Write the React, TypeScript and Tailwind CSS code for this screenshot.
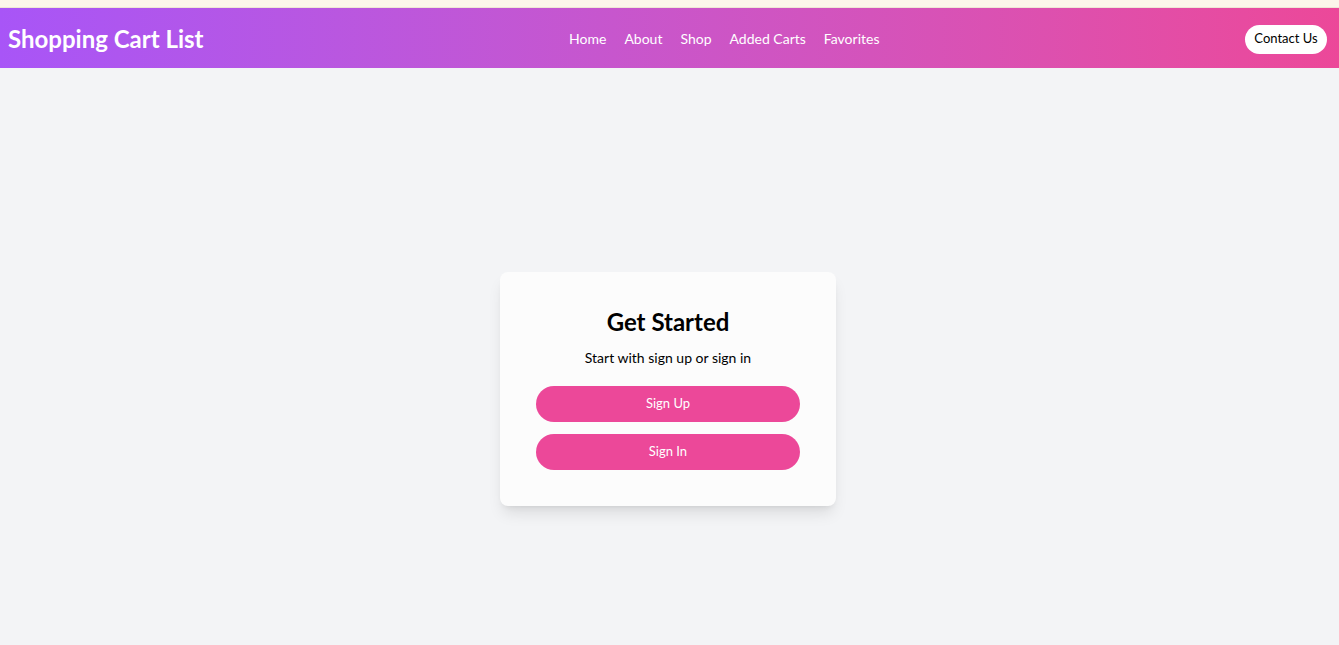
import React from "react";

const links = ["Home", "About", "Shop", "Added Carts", "Favorites"];

export default function App() {
  return (
    <div
      className="min-h-screen bg-[#f3f4f6] text-black"
      style={{ fontFamily: '"Segoe UI", Lato, "Noto Sans", sans-serif' }}
    >
      {/* top strip */}
      <div className="h-2 bg-[#fcf6ea] border-b border-[#efe6d6]" />

      {/* Navbar */}
      <nav className="h-[60px] flex items-center justify-between pl-2 pr-3 pt-[2px] bg-gradient-to-r from-[#a855f7] to-[#ec4899]">
        <h1 className="text-2xl font-bold text-white">Shopping Cart List</h1>
        <ul className="flex items-center gap-[18px] text-white text-sm">
          {links.map((l) => (
            <li key={l}>
              <a href="#">{l}</a>
            </li>
          ))}
        </ul>
        <button className="bg-white text-black text-[13px] whitespace-nowrap rounded-full w-[82px] h-[29px]">
          Contact Us
        </button>
      </nav>

      {/* Main */}
      <main className="flex justify-center pt-[204px] pr-[3px]">
        <div className="w-[336px] bg-[#fcfcfc] rounded-lg shadow-lg px-9 pt-[34px] pb-9 text-center">
          <h2 className="text-2xl font-bold">Get Started</h2>
          <p className="text-sm mt-2.5">Start with sign up or sign in</p>
          <div className="flex flex-col gap-3 mt-[18px]">
            <button className="h-9 rounded-full bg-[#ec4899] text-white text-[13px]">Sign Up</button>
            <button className="h-9 rounded-full bg-[#ec4899] text-white text-[13px]">Sign In</button>
          </div>
        </div>
      </main>
    </div>
  );
}
